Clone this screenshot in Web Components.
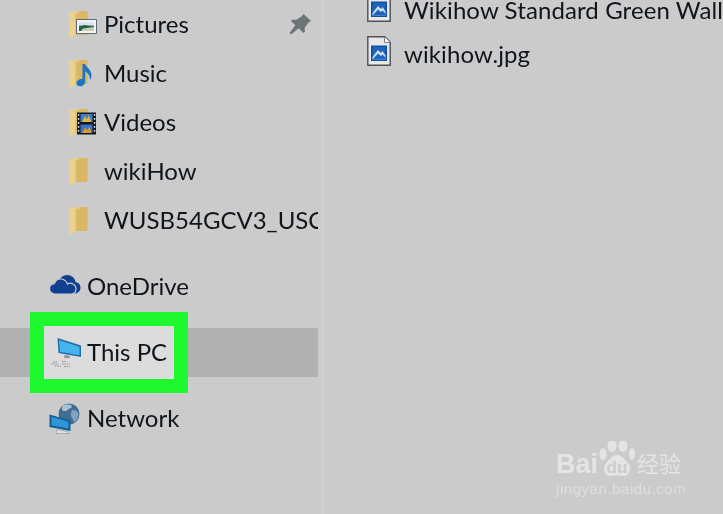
<!DOCTYPE html>
<html lang="en">
<head>
<meta charset="utf-8">
<title>This PC</title>
<style>
  html, body { margin: 0; height: 100%; background: #cbcbcb; overflow: hidden; }
</style>
</head>
<body>
<explorer-window>
  <nav-pane slot="nav">
    <nav-group indent="69">
      <nav-item icon="pictures" pinned>Pictures</nav-item>
      <nav-item icon="music">Music</nav-item>
      <nav-item icon="videos">Videos</nav-item>
      <nav-item icon="folder">wikiHow</nav-item>
      <nav-item icon="folder">WUSB54GCV3_USCA</nav-item>
    </nav-group>
    <nav-group indent="49">
      <nav-item icon="onedrive">OneDrive</nav-item>
    </nav-group>
    <nav-group indent="49">
      <nav-item icon="pc" selected>This PC</nav-item>
    </nav-group>
    <nav-group indent="49">
      <nav-item icon="network">Network</nav-item>
    </nav-group>
  </nav-pane>
  <file-list slot="files">
    <file-row>Wikihow Standard Green Wall</file-row>
    <file-row>wikihow.jpg</file-row>
  </file-list>
  <baidu-mark slot="mark"></baidu-mark>
</explorer-window>

<script>
// dibujos de los iconos, cada uno con su propio viewBox
const FOLDER = `
  <path d="M4 1h14.500v24H4z" fill="#d9b765"/>
  <path d="M4 1h6v2H4z" fill="#e8cd85"/>
  <path d="M0 1l8 3v20l-7.500 5L0 28z" fill="#ecd28c"/>
  <path d="M8 4v20l-2 1.500V4z" fill="#e0c173"/>`;

const ICONS = {
  folder: { w: 20, h: 29, svg: FOLDER },
  pictures: { w: 34, h: 29, svg: FOLDER + `
    <path d="M7.500 9.500h20v14h-20z" fill="#f4f4f4" stroke="#5d6b78"/>
    <path d="M10 12h15v9H10z" fill="#3d6f9a"/>
    <path d="M10 12h15v3.500H10z" fill="#d7e6f2"/>
    <path d="M10 17.500l5-2.500 10 2v4H10z" fill="#2f5a3c"/>
    <path d="M14 18.500l11-1.500v4H12z" fill="#c4cdb8"/>` },
  music: { w: 26, h: 29, svg: FOLDER + `
    <path d="M13.500 5h2.600c.6 3 6.400 5 6.400 11.500 0 2-.8 3.500-1.600 4.500.2-4-1.900-7-4.700-8.400V22.500c0 2.600-2.400 4.800-5 4.800-2.200 0-3.700-1.200-3.700-3 0-2.400 2.600-4.300 5.300-4.300.2 0 .5 0 .7 0z" fill="#1b76c4"/>` },
  videos: { w: 34, h: 29, svg: FOLDER + `
    <path d="M8 4.500h19V26.500H8z" fill="#14181c"/>
    <path d="M11.500 6h12v8h-12z" fill="#3f7fd0"/>
    <path d="M11.500 16.500h12v8.500h-12z" fill="#3a72c8"/>
    <path d="M13 14l3-5.800 2 3 1.500-4 3 6.800z" fill="#e2b93d"/>
    <path d="M13 25l3-5.500 2.500 2.500 2-3.500 2 6.500z" fill="#d69a2e"/>
    <path d="M8.800 6h1.500v1.800H8.800zM8.800 10h1.500v1.800H8.800zM8.800 14h1.500v1.800H8.800zM8.800 18h1.500v1.800H8.800zM8.800 22h1.500v1.800H8.800zM24.800 6h1.500v1.800h-1.500zM24.800 10h1.500v1.800h-1.500zM24.800 14h1.500v1.800h-1.500zM24.800 18h1.500v1.800h-1.500zM24.800 22h1.500v1.800h-1.500z" fill="#d8dde2"/>` },
  onedrive: { w: 32, h: 24, svg: `
    <path d="M8 9C9.500 4 13.500 0 18 0c4.500 0 8 3 8.500 7 3 .5 5 2.500 5 5.500 0 3.500-2.500 6-6 6H8z" fill="#0f3f8f"/>
    <path d="M6 19C2.800 19 .5 16.800.5 13.800c0-2.800 2.100-5 4.900-5.200C6.500 5.300 9.500 3.500 12.500 4c3 .5 5 2.500 6 5 1.500-1 4-1 6 .2 1.800 1.100 2.600 3 2.500 4.800 0 3-2 5-5 5z" fill="#0f3f8f" stroke="#cbcbcb" stroke-width="1.200"/>` },
  pc: { w: 36, h: 36, svg: `
    <path d="M8.500 3L32 10.500V22L9.500 18z" fill="#1f6ea8"/>
    <path d="M10 5.200L30.500 11.700V20.300L11 16.800z" fill="#46b4ee"/>
    <path d="M20 20.500l1 2.500h-6l.5-3z" fill="#8f969a"/>
    <path d="M2 26l9-2 9 1.500 9 1.500-7 7-11-1-9-3z" fill="#dadada"/>
    <path d="M4 27h5M2.500 29h7M6 31h6M13 26.500h5M13 29h7M15 31.500h6" stroke="#8c9296" stroke-width="1" stroke-dasharray="1.500 1"/>` },
  network: { w: 32, h: 32, svg: `
    <circle cx="20" cy="11" r="10.500" fill="#3f6d94"/>
    <path d="M14 2.500c3-1.500 6-1.500 8.500 0 1 2-1 3-3 3.500-1.500 2.500-4 2.500-6 1.500-1-1.500-.8-3.500.5-5z" fill="#a9c3d6"/>
    <path d="M23 7c3-.5 5.500 1 6.500 3.500 0 3.500-1.500 7-4.500 9-1-2-1-3.500-2.500-5-1-2.500-.8-5.500.5-7.500z" fill="#7fa3bf"/>
    <path d="M.5 11.500L21.500 17.500V28L.5 24z" fill="#135d96"/>
    <path d="M2.500 13.800L19.500 18.700V25.500L2.500 22.200z" fill="#2f97d8"/>
    <path d="M8 26.500l10 2 2 2H7z" fill="#dfe2e4" stroke="#8b9095" stroke-width=".6"/>` },
  pin: { w: 24, h: 24, svg: `
    <path d="M15.500 1l7.500 7-2.500 1.500-4 5.500.5 3.500-1.500 1.500-4.800-4.700L3 21.500 1.500 20l5.800-7.700L3 8l1.500-1.500 3.500.5L13.500 3.500z" fill="#6e7577"/>` },
  image: { w: 24, h: 30, svg: `
    <path d="M.8.800h17l5.400 5.400v23H.8z" fill="#e8e8e8" stroke="#4b5157" stroke-width="1.400"/>
    <path d="M17.500.800v5.700h5.700" fill="#fff" stroke="#7a8086"/>
    <path d="M4 9.500h16v15.500H4z" fill="#0f4fa8"/>
    <path d="M5.500 11h13v12.500h-13z" fill="#1f63bd"/>
    <path d="M5.500 21l5.500-7 3 3 1.500-2 3 4.500v4h-13z" fill="#cfe0f2"/>
    <path d="M5.500 23.500l5.500-6 3 2.500 1.500-1.500 3 3v2h-13z" fill="#1f63bd"/>` }
};

class WinIcon extends HTMLElement {
  connectedCallback() {
    const icon = ICONS[this.getAttribute('name')];
    this.attachShadow({ mode: 'open' }).innerHTML = `
      <style>
        :host { display: block; flex: none; line-height: 0; }
        svg { display: block; }
      </style>
      <svg width="${icon.w}" height="${icon.h}" viewBox="0 0 ${icon.w} ${icon.h}">${icon.svg}</svg>`;
  }
}

class ExplorerWindow extends HTMLElement {
  constructor() {
    super();
    this.attachShadow({ mode: 'open' }).innerHTML = `
      <style>
        :host {
          display: grid;
          grid-template-columns: 324px 1fr;
          height: 514px;
          overflow: hidden;
          background: #cbcbcb;
          color: #10151c;
          font-family: "Lato", "Noto Sans", sans-serif;
          font-size: 24px;
          position: relative;
          filter: blur(.35px);
        }
        .mark { position: absolute; left: 556px; top: 440px; display: block; }
      </style>
      <slot name="nav"></slot>
      <slot name="files"></slot>
      <div class="mark"><slot name="mark"></slot></div>`;
  }
}

class NavPane extends HTMLElement {
  constructor() {
    super();
    this.attachShadow({ mode: 'open' }).innerHTML = `
      <style>
        :host {
          display: flex;
          flex-direction: column;
          gap: 17px;
          box-sizing: border-box;
          height: 514px;
          padding-right: 4px;
          border-right: 2px solid #d2d2d2;
        }
      </style>
      <slot></slot>`;
  }
}

class NavGroup extends HTMLElement {
  constructor() {
    super();
    this.attachShadow({ mode: 'open' }).innerHTML = `
      <style>
        :host { display: flex; flex-direction: column; }
      </style>
      <slot></slot>`;
  }
  connectedCallback() {
    this.style.setProperty('--indent', this.getAttribute('indent') + 'px');
  }
}

class NavItem extends HTMLElement {
  constructor() {
    super();
    this.attachShadow({ mode: 'open' });
  }
  connectedCallback() {
    const name = this.getAttribute('icon');
    const labelX = { onedrive: 87, pc: 87, network: 87 }[name] || 104;
    const indent = parseInt(getComputedStyle(this).getPropertyValue('--indent')) || 69;
    const selected = this.hasAttribute('selected');
    this.shadowRoot.innerHTML = `
      <style>
        :host {
          display: block;
          position: relative;
          height: 49px;
          background: ${selected ? '#b1b1b1' : 'transparent'};
        }
        .row {
          display: flex;
          align-items: center;
          height: 49px;
          padding-left: ${indent}px;
          position: relative;
          z-index: 1;
          overflow: hidden;
        }
        .slot-icon { width: ${labelX - indent}px; flex: none; }
        .label { white-space: nowrap; flex: 1; min-width: 0; overflow: hidden; line-height: 47px; height: 49px; }
        .pin { flex: none; margin-right: 6px; }
        .callout {
          position: absolute;
          left: 30px;
          top: -16px;
          width: 130px;
          height: 53px;
          border: 14px solid #1ff72f;
          background: #dcdcdc;
        }
      </style>
      ${selected ? '<div class="callout"></div>' : ''}
      <div class="row">
        <div class="slot-icon"><win-icon name="${name}"></win-icon></div>
        <div class="label"><slot></slot></div>
        ${this.hasAttribute('pinned') ? '<win-icon class="pin" name="pin"></win-icon>' : ''}
      </div>`;
  }
}

class FileList extends HTMLElement {
  constructor() {
    super();
    this.attachShadow({ mode: 'open' }).innerHTML = `
      <style>
        :host {
          display: flex;
          flex-direction: column;
          margin-top: -12px;
          padding-left: 43px;
          overflow: hidden;
          min-width: 0;
        }
      </style>
      <slot></slot>`;
  }
}

class FileRow extends HTMLElement {
  constructor() {
    super();
    this.attachShadow({ mode: 'open' }).innerHTML = `
      <style>
        :host {
          display: flex;
          align-items: center;
          gap: 13px;
          height: 44px;
          white-space: nowrap;
        }
        win-icon { margin-bottom: 6px; }
        span { line-height: 20px; margin-bottom: 1px; letter-spacing: .1px; }
      </style>
      <win-icon name="image"></win-icon>
      <span><slot></slot></span>`;
  }
}

class BaiduMark extends HTMLElement {
  constructor() {
    super();
    this.attachShadow({ mode: 'open' }).innerHTML = `
      <style>
        :host { display: block; width: 130px; color: #e4e4e4; font-family: "Liberation Sans", "Noto Sans CJK SC", sans-serif; }
        .top { display: flex; align-items: flex-end; height: 37px; }
        .bai { font-size: 27px; font-weight: 700; line-height: 27px; margin-bottom: -1px; width: 42px; flex: none; }
        .paw { position: relative; width: 37px; height: 36px; flex: none; }
        .paw svg { position: absolute; inset: 0; }
        .du {
          position: absolute; left: 6px; top: 19px; width: 26px; text-align: center;
          font-size: 17px; font-weight: 700; color: #cbcbcb; line-height: 16px;
        }
        .cn { font-size: 22px; line-height: 24px; margin-left: 2px; flex: none; }
        .url { font-size: 15px; letter-spacing: .55px; line-height: 18px; margin-top: 3px; color: #dedede; white-space: nowrap; }
      </style>
      <div class="top">
        <span class="bai">Bai</span>
        <span class="paw">
          <svg width="37" height="36" viewBox="0 0 37 36">
            <ellipse cx="14" cy="5" rx="4.500" ry="6" fill="#e4e4e4"/>
            <ellipse cx="25" cy="5" rx="4.500" ry="6" fill="#e4e4e4"/>
            <ellipse cx="5" cy="13" rx="3.500" ry="6" fill="#e4e4e4"/>
            <ellipse cx="34" cy="13" rx="3" ry="6" fill="#e4e4e4"/>
            <path d="M19 14c5 0 7 4 11 8 4 5 2 13-5 13-2 0-4-1-6-1s-4 1-6 1c-7 0-9-8-5-13 4-4 6-8 11-8z" fill="#e4e4e4"/>
          </svg>
          <span class="du">du</span>
        </span>
        <span class="cn">经验</span>
      </div>
      <div class="url">jingyan.baidu.com</div>`;
  }
}

customElements.define('win-icon', WinIcon);
customElements.define('explorer-window', ExplorerWindow);
customElements.define('nav-pane', NavPane);
customElements.define('nav-group', NavGroup);
customElements.define('nav-item', NavItem);
customElements.define('file-list', FileList);
customElements.define('file-row', FileRow);
customElements.define('baidu-mark', BaiduMark);
</script>
</body>
</html>
